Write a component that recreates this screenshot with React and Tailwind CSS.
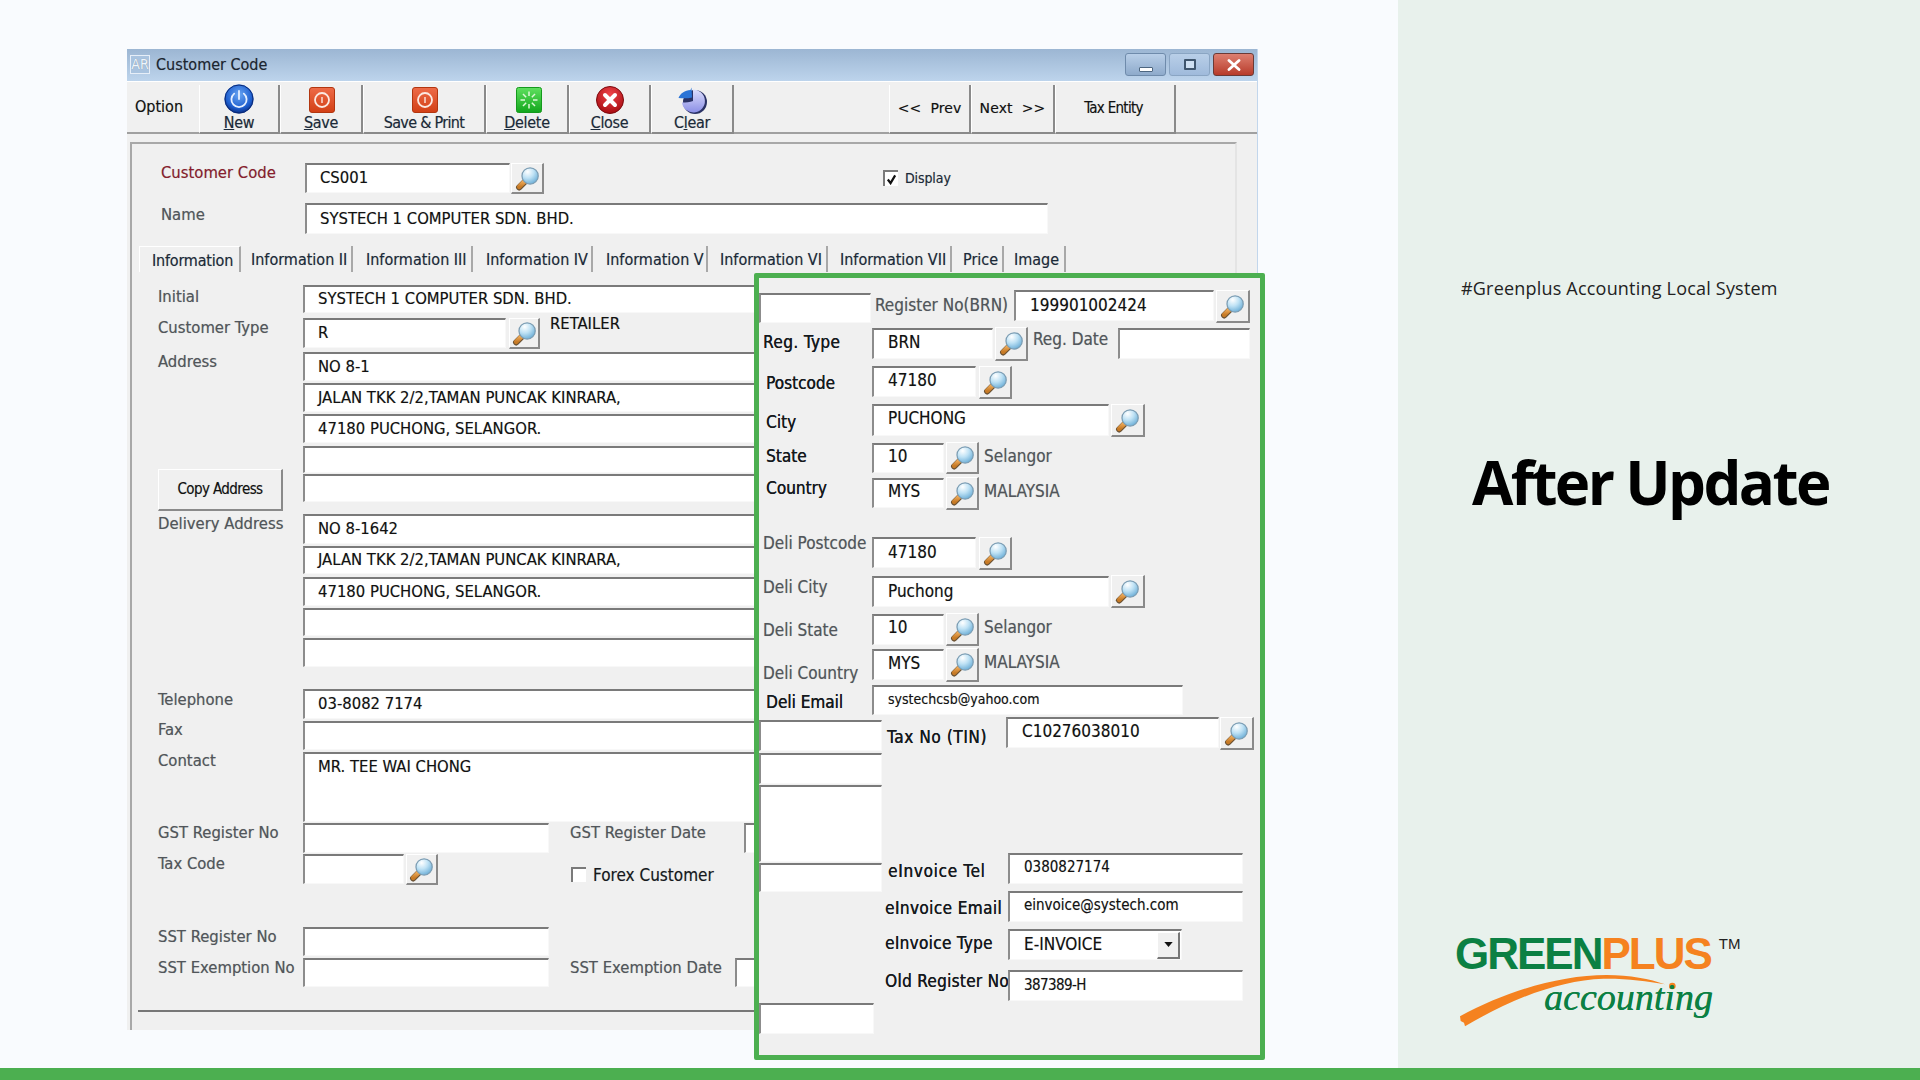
const inBase = "flex items-center pl-[13px] bg-white border-t-2 border-l-2 border-r border-b border-t-[#7a7a7a] border-l-[#8c8c8c] border-r-[#f8f8f8] border-b-[#f8f8f8] text-[#111] shrink-0 whitespace-nowrap overflow-hidden box-border";
const sbBase = "flex items-center justify-center shrink-0 box-border bg-[#f0f0f0] border-t border-l border-r-2 border-b-2 border-t-white border-l-white border-r-[#8a8a8a] border-b-[#8a8a8a]";
const lblBase = "h-[20px] leading-[20px] shrink-0 whitespace-nowrap text-[#51565b]";
const darkBase = "h-[20px] leading-[20px] shrink-0 whitespace-nowrap text-[#15191d] [text-shadow:0.35px_0_0_#15191d]";

function In({ c, children }) {
  return <div className={inBase + " " + c}>{children}</div>;
}
function Lb({ c, children }) {
  return <div className={lblBase + " " + c}>{children}</div>;
}
function Dk({ c, children }) {
  return <div className={darkBase + " " + c}>{children}</div>;
}
function Glass() {
  return (
    <svg viewBox="0 0 24 24" className="w-[25px] h-[25px]">
      <path d="M10 14.5 L4 20.5" stroke="#6b5234" strokeWidth="6" strokeLinecap="round" />
      <path d="M10 14 L4 20" stroke="url(#hdl)" strokeWidth="4.4" strokeLinecap="round" />
      <circle cx="14.5" cy="9.5" r="7.8" fill="url(#lens)" stroke="#7c9db3" strokeWidth="1.2" />
    </svg>
  );
}
function Sb({ c }) {
  return <div className={sbBase + " " + c}><Glass /></div>;
}
function Defs() {
  return (
    <svg className="block w-0 h-0">
      <defs>
        <radialGradient id="lens" cx="35%" cy="25%" r="85%">
          <stop offset="0%" stopColor="#ffffff" />
          <stop offset="45%" stopColor="#bfe2f5" />
          <stop offset="100%" stopColor="#5fa6d2" />
        </radialGradient>
        <linearGradient id="hdl" x1="0" y1="0" x2="0" y2="1">
          <stop offset="0%" stopColor="#f3b263" />
          <stop offset="100%" stopColor="#c77a25" />
        </linearGradient>
        <radialGradient id="blueB" cx="50%" cy="35%" r="65%">
          <stop offset="0%" stopColor="#6aa6f2" />
          <stop offset="70%" stopColor="#1e5fd0" />
          <stop offset="100%" stopColor="#0b2f86" />
        </radialGradient>
        <linearGradient id="orangeB" x1="0" y1="0" x2="0" y2="1">
          <stop offset="0%" stopColor="#ee6b48" />
          <stop offset="100%" stopColor="#d23f15" />
        </linearGradient>
        <linearGradient id="greenB" x1="0" y1="0" x2="0" y2="1">
          <stop offset="0%" stopColor="#5fe05f" />
          <stop offset="100%" stopColor="#12a61c" />
        </linearGradient>
        <radialGradient id="redB" cx="50%" cy="30%" r="70%">
          <stop offset="0%" stopColor="#f0444a" />
          <stop offset="100%" stopColor="#a80d12" />
        </radialGradient>
        <linearGradient id="pieB" x1="0" y1="0" x2="0" y2="1">
          <stop offset="0%" stopColor="#dcdefc" />
          <stop offset="100%" stopColor="#8b8fe6" />
        </linearGradient>
      </defs>
    </svg>
  );
}
function IcoNew() {
  return (
    <svg viewBox="0 0 30 30" className="w-[30px] h-[30px] -mt-[2px]">
      <circle cx="15" cy="15" r="14.5" fill="url(#blueB)" />
      <circle cx="15" cy="15" r="14" fill="none" stroke="#0a2a78" strokeWidth="1" />
      <path d="M10.2 9.6 A7.6 7.6 0 1 0 19.8 9.6" fill="none" stroke="#e6f0ff" strokeWidth="1.8" strokeLinecap="round" />
      <path d="M15 7 V15" stroke="#e6f0ff" strokeWidth="1.8" strokeLinecap="round" />
    </svg>
  );
}
function IcoSave() {
  return (
    <svg viewBox="0 0 26 26" className="w-[26px] h-[26px] ml-[2px]">
      <rect x="0.5" y="0.5" width="25" height="25" rx="2.5" fill="url(#orangeB)" stroke="#b23610" />
      <circle cx="13" cy="13" r="7" fill="none" stroke="#fbe9e2" strokeWidth="1.8" />
      <path d="M13 10 V16" stroke="#fbe9e2" strokeWidth="1.4" />
    </svg>
  );
}
function IcoDelete() {
  const a = [0, 45, 90, 135, 180, 225, 270, 315];
  return (
    <svg viewBox="0 0 26 26" className="w-[26px] h-[26px] ml-[3px]">
      <rect x="0.5" y="0.5" width="25" height="25" rx="2" fill="url(#greenB)" stroke="#159a1d" />
      {a.map((d) => (
        <path key={d} d="M13 4.5 V9" stroke="#dff7d8" strokeWidth="1.5" transform={`rotate(${d} 13 13)`} />
      ))}
    </svg>
  );
}
function IcoClose() {
  return (
    <svg viewBox="0 0 28 28" className="w-[28px] h-[28px] ml-[1px]">
      <circle cx="14" cy="14" r="13.5" fill="url(#redB)" stroke="#7c0a0e" />
      <path d="M9 9 L19 19 M19 9 L9 19" stroke="#fff" strokeWidth="4" strokeLinecap="round" />
    </svg>
  );
}
function IcoClear() {
  return (
    <svg viewBox="0 0 30 27" className="w-[30px] h-[27px] ml-[1px]">
      <circle cx="17" cy="15" r="12" fill="#2a3265" />
      <path d="M15 14 L15 2.5 A11.5 11.5 0 1 1 4 15.5 C 8 15.5 12 15 15 14 Z" fill="url(#pieB)" />
      <path d="M0.5 11 C 2 6.5 7 3.5 12.5 3 L13.5 0.5 L14 10.5 C 10 11.5 5 11.5 0.5 11 Z" fill="#2b74d6" />
    </svg>
  );
}

function TBtn({ w, c, icon, children }) {
  return (
    <div className={"flex flex-col items-center shrink-0 box-border pt-[2px] border-l border-l-white border-r-2 border-r-[#8a8a8a] border-b-2 border-b-[#8a8a8a] text-[#1b2a3a] " + w + " " + c}>
      <div className="h-[26px] flex items-center justify-center">{icon}</div>
      <div className="h-[20px] leading-[20px] whitespace-nowrap">{children}</div>
    </div>
  );
}
function NavBtn({ w, c, children }) {
  return (
    <div className={"flex items-center justify-center shrink-0 box-border border-l border-l-white border-r-2 border-r-[#8a8a8a] border-b-2 border-b-[#8a8a8a] text-[#111] whitespace-pre " + w + " " + c}>
      {children}
    </div>
  );
}
function Tab({ c, children }) {
  return (
    <div className={"h-[26px] box-border leading-[28px] shrink-0 whitespace-nowrap text-[#1b2a3a] border-r-2 border-r-[#a8a8a8] " + c}>
      {children}
    </div>
  );
}

export default function App() {
  return (
    <div className="w-[1920px] h-[1080px] flex flex-col overflow-hidden bg-[#f9fbfe] font-['DejaVu_Sans',sans-serif] [font-stretch:condensed] text-[16.5px]">
      <Defs />
      <div className="flex flex-1 min-h-0">
        <div className="flex-1 min-w-0">
          <div className="relative ml-[127px] mt-[49px] w-[1131px] h-[981px] bg-[#f0f0f0] flex flex-col border-r border-r-[#c2d6ec] box-border [text-shadow:0_0_0.7px_rgba(0,0,0,0.3)]">
            {/* title bar */}
            <div className="h-[32px] shrink-0 flex items-start bg-linear-to-b from-[#9cb6d3] to-[#bdd4ec]">
              <div className="ml-[3px] mt-[6px] w-[20px] h-[19px] border border-[#e6eef8] bg-[#a9c3df] text-[#eef5fc] text-[14px] leading-[17px] text-center box-border">AR</div>
              <div className="ml-[6px] mt-[6px] h-[20px] leading-[20px] text-[16px] text-[#1c2530]">Customer Code</div>
              <div className="ml-auto flex mt-[4px] mr-[3px] gap-[3px]">
                <div className="w-[41px] h-[23px] box-border rounded-[3px] border border-[#6f8bab] bg-linear-to-b from-[#b9cfe8] to-[#8eaacb] flex items-end justify-center pb-[3px]">
                  <div className="w-[14px] h-[5px] bg-white border border-[#4d6680] rounded-[1px]"></div>
                </div>
                <div className="w-[41px] h-[23px] box-border rounded-[3px] border border-[#8aa5c3] bg-linear-to-b from-[#b9cfe8] to-[#9fbadb] flex items-center justify-center">
                  <div className="w-[12px] h-[11px] box-border border-2 border-[#3f556d] bg-[#cfe0f2] rounded-[1px]"></div>
                </div>
                <div className="w-[41px] h-[23px] box-border rounded-[3px] border border-[#6b3a36] bg-linear-to-b from-[#dd7f70] to-[#b73a2a] flex items-center justify-center">
                  <svg viewBox="0 0 14 12" className="w-[14px] h-[12px]"><path d="M2 1.5 L12 10.5 M12 1.5 L2 10.5" stroke="#fff" strokeWidth="2.8" strokeLinecap="round" /></svg>
                </div>
              </div>
            </div>
            {/* toolbar */}
            <div className="h-[49px] shrink-0 flex items-stretch box-content pt-[3px] border-t border-t-white">
              <div className="w-[72px] shrink-0 box-border pl-[8px] border-b-2 border-b-[#a0a0a0] flex items-center text-[16px] text-[#111] pb-[4px]">Option</div>
              <TBtn w="w-[81px]" c="text-[16px] tracking-[-0.3px]" icon={<IcoNew />}><u>N</u>ew</TBtn>
              <TBtn w="w-[83px]" c="text-[16px] tracking-[-0.3px]" icon={<IcoSave />}><u>S</u>ave</TBtn>
              <TBtn w="w-[123px]" c="text-[16px] tracking-[-0.7px]" icon={<IcoSave />}>Save &amp; Print</TBtn>
              <TBtn w="w-[83px]" c="text-[16px] tracking-[-0.3px]" icon={<IcoDelete />}><u>D</u>elete</TBtn>
              <TBtn w="w-[82px]" c="text-[16px] tracking-[-0.3px]" icon={<IcoClose />}><u>C</u>lose</TBtn>
              <TBtn w="w-[83px]" c="text-[16px] tracking-[-0.3px]" icon={<IcoClear />}>C<u>l</u>ear</TBtn>
              <div className="w-[155px] shrink-0 border-b-2 border-b-[#a0a0a0]"></div>
              <NavBtn w="w-[82px]" c="[font-stretch:normal] text-[14px] tracking-[0.1px]">{"<<  Prev"}</NavBtn>
              <NavBtn w="w-[84px]" c="[font-stretch:normal] text-[14px] tracking-[0.1px]">{"Next  >>"}</NavBtn>
              <NavBtn w="w-[121px]" c="tracking-[-0.7px] text-[15px] pr-[3px]">Tax Entity</NavBtn>
              <div className="flex-1 border-b-2 border-b-[#a0a0a0]"></div>
            </div>
            {/* group box */}
            <div className="ml-[3px] mt-[8px] w-[1107px] flex-1 min-h-0 box-border border-t-2 border-l-2 border-r-2 border-t-[#a8a8a8] border-l-[#a8a8a8] border-r-[#e4e4e4]">
              <div className="ml-[29px] mt-[19px] flex items-start h-[31px]">
                <div className="w-[144px] h-[20px] leading-[20px] text-[#8b1c2c]">Customer Code</div>
                <In c="w-[205px] h-[30px]">CS001</In>
                <Sb c="ml-[1px] w-[33px] h-[31px]" />
                <div className="ml-[339px] mt-[7px] w-[15px] h-[16px] box-border bg-white border-t-2 border-l-2 border-t-[#7a7a7a] border-l-[#7a7a7a] flex items-center justify-center">
                  <svg viewBox="0 0 12 12" className="w-[11px] h-[11px]"><path d="M2 6 L5 10 L10 1.5" fill="none" stroke="#111" strokeWidth="2.4" /></svg>
                </div>
                <div className="ml-[7px] mt-[5px] h-[20px] leading-[20px] text-[14px] tracking-[-0.1px] text-[#1b2a3a]">Display</div>
              </div>
              <div className="ml-[29px] mt-[9px] flex items-start h-[31px]">
                <Lb c="w-[144px] mt-[2px]">Name</Lb>
                <In c="w-[743px] h-[31px]">SYSTECH 1 COMPUTER SDN. BHD.</In>
              </div>
              {/* tabs */}
              <div className="ml-[7px] mt-[12px] flex items-start h-[26px] text-[16px]">
                <Tab c="w-[102px] pl-[12px] border-t border-l border-t-white border-l-white tracking-[-0.2px]">Information</Tab>
                <Tab c="w-[112px] pl-[10px]">Information II</Tab>
                <Tab c="w-[120px] pl-[13px]">Information III</Tab>
                <Tab c="w-[120px] pl-[13px]">Information IV</Tab>
                <Tab c="w-[115px] pl-[13px]">Information V</Tab>
                <Tab c="w-[120px] pl-[12px]">Information VI</Tab>
                <Tab c="w-[124px] pl-[12px]">Information VII</Tab>
                <Tab c="w-[52px] pl-[11px]">Price</Tab>
                <Tab c="w-[62px] pl-[10px]">Image</Tab>
              </div>
              {/* form */}
              <div className="ml-[26px] flex flex-col items-start">
                <div className="mt-[13px] flex items-start h-[28px]">
                  <Lb c="w-[145px] mt-[2px]">Initial</Lb>
                  <In c="w-[470px] h-[28px]">SYSTECH 1 COMPUTER SDN. BHD.</In>
                </div>
                <div className="mt-[5px] flex items-start h-[31px]">
                  <Lb c="w-[145px]">Customer Type</Lb>
                  <In c="w-[203px] h-[30px]">R</In>
                  <Sb c="ml-[3px] w-[31px] h-[31px]" />
                  <div className="ml-[10px] -mt-[4px] h-[20px] leading-[20px] text-[#111]">RETAILER</div>
                </div>
                <div className="mt-[3px] flex items-start h-[315px]">
                  <div className="w-[145px] shrink-0 flex flex-col items-start">
                    <Lb c="">Address</Lb>
                    <div className="mt-[97px] w-[125px] h-[42px] box-border bg-[#f0f0f0] border-t border-l border-r-2 border-b-2 border-t-white border-l-white border-r-[#8a8a8a] border-b-[#8a8a8a] flex items-center justify-center text-[15px] tracking-[-0.6px] text-[#111]">Copy Address</div>
                    <Lb c="mt-[3px]">Delivery Address</Lb>
                  </div>
                  <div className="flex flex-col">
                    <In c="w-[470px] h-[29px]">NO 8-1</In>
                    <In c="w-[470px] h-[29px] mt-[2px]">JALAN TKK 2/2,TAMAN PUNCAK KINRARA,</In>
                    <In c="w-[470px] h-[29px] mt-[2px]">47180 PUCHONG, SELANGOR.</In>
                    <In c="w-[470px] h-[27px] mt-[3px]"></In>
                    <In c="w-[470px] h-[28px] mt-[1px]"></In>
                    <In c="w-[470px] h-[30px] mt-[12px]">NO 8-1642</In>
                    <In c="w-[470px] h-[28px] mt-[2px]">JALAN TKK 2/2,TAMAN PUNCAK KINRARA,</In>
                    <In c="w-[470px] h-[29px] mt-[3px]">47180 PUCHONG, SELANGOR.</In>
                    <In c="w-[470px] h-[28px] mt-[2px]"></In>
                    <In c="w-[470px] h-[29px] mt-[2px]"></In>
                  </div>
                </div>
                <div className="mt-[22px] flex items-start h-[30px]">
                  <Lb c="w-[145px] mt-[1px]">Telephone</Lb>
                  <In c="w-[470px] h-[30px]">03-8082 7174</In>
                </div>
                <div className="mt-[2px] flex items-start h-[29px]">
                  <Lb c="w-[145px] -mt-[1px]">Fax</Lb>
                  <In c="w-[470px] h-[29px]"></In>
                </div>
                <div className="mt-[2px] flex items-start h-[70px]">
                  <Lb c="w-[145px] -mt-[1px]">Contact</Lb>
                  <In c="w-[470px] h-[70px] items-start pt-[1px]">MR. TEE WAI CHONG</In>
                </div>
                <div className="mt-[1px] flex items-start h-[30px]">
                  <Lb c="w-[145px]">GST Register No</Lb>
                  <In c="w-[246px] h-[30px]"></In>
                  <Lb c="ml-[21px] w-[174px]">GST Register Date</Lb>
                  <In c="w-[40px] h-[30px]"></In>
                </div>
                <div className="mt-[1px] flex items-start h-[31px]">
                  <Lb c="w-[145px]">Tax Code</Lb>
                  <In c="w-[101px] h-[30px]"></In>
                  <Sb c="ml-[2px] w-[32px] h-[31px]" />
                  <div className="ml-[133px] mt-[13px] w-[15px] h-[15px] box-border bg-white border-t-2 border-l-2 border-t-[#7a7a7a] border-l-[#7a7a7a]"></div>
                  <div className="ml-[7px] mt-[11px] h-[20px] leading-[20px] text-[17px] text-[#15191d]">Forex Customer</div>
                </div>
                <div className="mt-[42px] flex items-start h-[29px]">
                  <Lb c="w-[145px]">SST Register No</Lb>
                  <In c="w-[246px] h-[29px]"></In>
                </div>
                <div className="mt-[2px] flex items-start h-[29px]">
                  <Lb c="w-[145px]">SST Exemption No</Lb>
                  <In c="w-[246px] h-[29px]"></In>
                  <Lb c="ml-[21px] w-[165px]">SST Exemption Date</Lb>
                  <In c="w-[40px] h-[29px]"></In>
                </div>
                <div className="mt-[23px] -ml-[20px] w-[1000px] h-[2px] bg-[#777]"></div>
              </div>
            </div>
            {/* green overlay */}
            <div className="absolute left-[627px] top-[224px] w-[511px] h-[787px] box-border border-[5px] border-[#4caf50] rounded-[2px] bg-[#f0f0f0] flex flex-col text-[17px]">
              <div className="mt-[12px] flex items-start h-[33px]">
                <In c="w-[112px] h-[30px] mt-[3px] border-l-0"></In>
                <Lb c="ml-[4px] w-[139px] mt-[5px]">Register No(BRN)</Lb>
                <In c="w-[200px] h-[31px] pl-[14px] pb-[1px]">199901002424</In>
                <Sb c="ml-[2px] w-[34px] h-[33px]" />
              </div>
              <div className="mt-[4px] flex items-start h-[34px]">
                <Dk c="ml-[4px] w-[109px] mt-[5px] tracking-[0.4px]">Reg. Type</Dk>
                <In c="w-[121px] h-[31px] mt-[1px] pl-[14px] pb-[2px]">BRN</In>
                <Sb c="ml-[2px] w-[33px] h-[34px]" />
                <Lb c="ml-[5px] w-[85px] mt-[2px]">Reg. Date</Lb>
                <In c="w-[132px] h-[31px] mt-[1px]"></In>
              </div>
              <div className="mt-[5px] flex items-start h-[33px]">
                <Dk c="ml-[7px] w-[106px] mt-[7px]">Postcode</Dk>
                <In c="w-[104px] h-[31px] pl-[14px] pb-[2px]">47180</In>
                <Sb c="ml-[3px] w-[33px] h-[33px]" />
              </div>
              <div className="mt-[5px] flex items-start h-[33px]">
                <Dk c="ml-[7px] w-[106px] mt-[8px]">City</Dk>
                <In c="w-[237px] h-[32px] pl-[14px] pb-[3px]">PUCHONG</In>
                <Sb c="ml-[2px] w-[34px] h-[33px]" />
              </div>
              <div className="mt-[5px] flex items-start h-[32px]">
                <Dk c="ml-[7px] w-[106px] mt-[4px]">State</Dk>
                <In c="w-[72px] h-[30px] mt-[1px] pl-[14px] pb-[3px]">10</In>
                <Sb c="ml-[2px] w-[33px] h-[32px]" />
                <Lb c="ml-[5px] mt-[4px]">Selangor</Lb>
              </div>
              <div className="mt-[3px] flex items-start h-[33px]">
                <Dk c="ml-[7px] w-[106px] mt-[1px]">Country</Dk>
                <In c="w-[72px] h-[30px] mt-[1px] pl-[14px] pb-[3px]">MYS</In>
                <Sb c="ml-[2px] w-[33px] h-[33px]" />
                <Lb c="ml-[5px] mt-[4px]">MALAYSIA</Lb>
              </div>
              <div className="mt-[27px] flex items-start h-[33px]">
                <Lb c="ml-[4px] w-[109px] -mt-[4px]">Deli Postcode</Lb>
                <In c="w-[104px] h-[31px] pl-[14px]">47180</In>
                <Sb c="ml-[3px] w-[33px] h-[33px]" />
              </div>
              <div className="mt-[5px] flex items-start h-[33px]">
                <Lb c="ml-[4px] w-[109px] mt-[2px]">Deli City</Lb>
                <In c="w-[237px] h-[31px] mt-[1px] pl-[14px] pb-[1px]">Puchong</In>
                <Sb c="ml-[2px] w-[34px] h-[33px]" />
              </div>
              <div className="mt-[5px] flex items-start h-[33px]">
                <Lb c="ml-[4px] w-[109px] mt-[7px]">Deli State</Lb>
                <In c="w-[72px] h-[31px] mt-[1px] pl-[14px] pb-[4px]">10</In>
                <Sb c="ml-[2px] w-[33px] h-[33px]" />
                <Lb c="ml-[5px] mt-[4px]">Selangor</Lb>
              </div>
              <div className="mt-[2px] flex items-start h-[34px]">
                <Lb c="ml-[4px] w-[109px] mt-[15px]">Deli Country</Lb>
                <In c="w-[72px] h-[31px] mt-[1px] pl-[14px] pb-[2px]">MYS</In>
                <Sb c="ml-[2px] w-[33px] h-[34px]" />
                <Lb c="ml-[5px] mt-[4px]">MALAYSIA</Lb>
              </div>
              <div className="mt-[3px] flex items-start h-[30px]">
                <Dk c="ml-[7px] w-[106px] mt-[7px]">Deli Email</Dk>
                <In c="w-[311px] h-[30px] pl-[14px] text-[14px] pb-[3px]">systechcsb@yahoo.com</In>
              </div>
              <div className="mt-[2px] flex items-start">
                <div className="w-[123px] shrink-0 flex flex-col">
                  <In c="w-[123px] h-[31px] mt-[3px] border-l-0"></In>
                  <In c="w-[123px] h-[31px] mt-[2px] border-l-0"></In>
                  <In c="w-[123px] h-[77px] mt-[1px] border-l-0"></In>
                  <In c="w-[123px] h-[29px] mt-[1px] border-l-0"></In>
                  <In c="w-[115px] h-[31px] mt-[111px] border-l-0"></In>
                </div>
                <div className="flex flex-col">
                  <div className="flex items-start h-[33px]">
                    <Dk c="ml-[5px] w-[119px] mt-[10px] tracking-[0.6px]">Tax No (TIN)</Dk>
                    <In c="w-[213px] h-[31px] pl-[14px] pb-[3px]">C10276038010</In>
                    <Sb c="ml-[1px] w-[34px] h-[33px]" />
                  </div>
                  <div className="mt-[103px] flex items-start h-[31px]">
                    <Dk c="ml-[6px] w-[120px] mt-[8px] tracking-[0.7px]">eInvoice Tel</Dk>
                    <In c="w-[235px] h-[31px] pl-[14px] pb-[4px] text-[15px]">0380827174</In>
                  </div>
                  <div className="mt-[7px] flex items-start h-[31px]">
                    <Dk c="ml-[3px] w-[123px] mt-[7px] tracking-[0.4px]">eInvoice Email</Dk>
                    <In c="w-[235px] h-[31px] pl-[14px] pb-[3px] text-[15px]">einvoice@systech.com</In>
                  </div>
                  <div className="mt-[7px] flex items-start h-[31px]">
                    <Dk c="ml-[3px] w-[123px] mt-[4px] tracking-[0.3px]">eInvoice Type</Dk>
                    <div className={inBase + " pl-[14px] w-[174px] h-[31px] pr-[1px]"}>
                      <span className="flex-1">E-INVOICE</span>
                      <div className="w-[23px] h-[27px] box-border border-t border-l border-r-2 border-b-2 border-t-white border-l-white border-r-[#777] border-b-[#777] bg-[#f0f0f0] flex items-center justify-center">
                        <svg viewBox="0 0 10 6" className="w-[9px] h-[5px]"><path d="M0 0 H10 L5 6 Z" fill="#111" /></svg>
                      </div>
                    </div>
                  </div>
                  <div className="mt-[10px] flex items-start h-[31px]">
                    <Dk c="ml-[3px] w-[123px] mt-[1px] tracking-[0.3px]">Old Register No</Dk>
                    <In c="w-[235px] h-[31px] pl-[14px] pb-[1px] tracking-[-0.6px] text-[15px]">387389-H</In>
                  </div>
                </div>
              </div>
            </div>
          </div>
        </div>
        {/* right panel */}
        <div className="w-[522px] shrink-0 bg-[#e8f1ec] pl-[63px] pt-[276px] flex flex-col font-['Open_Sans',sans-serif] [font-stretch:normal]">
          <div className="text-[18px] leading-[24px] tracking-[0.2px] text-[#222]">#Greenplus Accounting Local System</div>
          <div className="ml-[11px] mt-[147px] h-[70px] text-[60px] leading-[70px] font-bold tracking-[-2.6px] text-black whitespace-nowrap">After Update</div>
          <div className="relative -ml-[6px] mt-[415px] w-[300px] h-[100px] font-['Liberation_Sans',sans-serif]">
            <svg viewBox="105 93 780 300" className="block w-[260px] h-[100px]">
              <path d="M120 346 C 260 270 420 222 560 222 C 630 222 690 234 735 250 C 680 240 620 232 550 233 C 420 238 280 290 135 376 L 132 365 L 122 360 Z" fill="#f58220" />
              <circle cx="757" cy="255" r="10" fill="#f58220" />
            </svg>
            <div className="absolute left-0 top-0 flex items-start">
              <span className="text-[44px] leading-[44px] font-bold tracking-[-2px] text-[#0b8043]">GREEN</span>
              <span className="text-[44px] leading-[44px] font-bold tracking-[-2px] text-[#f58220]">PLUS</span>
              <span className="ml-[8px] mt-[4px] text-[15px] leading-[15px] text-[#222]">TM</span>
            </div>
            <div className="absolute left-[89px] top-[46px] text-[38px] leading-[38px] italic font-['Liberation_Serif',serif] text-[#0b8043] [text-shadow:0.3px_0_0_#0b8043]">accounting</div>
          </div>
        </div>
      </div>
      <div className="h-[12px] shrink-0 bg-[#4caf50]"></div>
    </div>
  );
}
